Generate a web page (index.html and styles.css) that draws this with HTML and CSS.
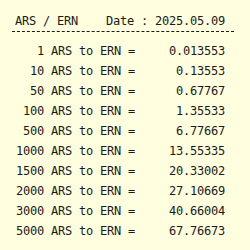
FILE: index.html
```html
<!DOCTYPE html>
<html>
<head>
<meta charset="utf-8">
<link rel="stylesheet" href="styles.css">
</head>
<body>
<div class="rates">
  <div class="head"><span>ARS / ERN</span><span>Date : 2025.05.09</span></div>
  <div class="list">
    <div class="row"><span class="lbl">1 ARS to ERN =</span><span class="val">0.013553</span></div>
    <div class="row"><span class="lbl">10 ARS to ERN =</span><span class="val">0.13553</span></div>
    <div class="row"><span class="lbl">50 ARS to ERN =</span><span class="val">0.67767</span></div>
    <div class="row"><span class="lbl">100 ARS to ERN =</span><span class="val">1.35533</span></div>
    <div class="row"><span class="lbl">500 ARS to ERN =</span><span class="val">6.77667</span></div>
    <div class="row"><span class="lbl">1000 ARS to ERN =</span><span class="val">13.55335</span></div>
    <div class="row"><span class="lbl">1500 ARS to ERN =</span><span class="val">20.33002</span></div>
    <div class="row"><span class="lbl">2000 ARS to ERN =</span><span class="val">27.10669</span></div>
    <div class="row"><span class="lbl">3000 ARS to ERN =</span><span class="val">40.66004</span></div>
    <div class="row"><span class="lbl">5000 ARS to ERN =</span><span class="val">67.76673</span></div>
  </div>
</div>
</body>
</html>
```

FILE: styles.css
```css
html, body {
  margin: 0;
  padding: 0;
  background: #ffffe0;
}
body {
  font-family: "DejaVu Sans Mono", monospace;
  font-size: 12px;
  letter-spacing: -0.224px;
  color: #1a1a1a;
}
.rates {
  width: 222px;
  padding: 12px 0 0 12px;
}
.head {
  display: flex;
  justify-content: space-between;
  padding: 0 9px 0 3px;
  line-height: 19px;
  border-bottom: 1px dashed #1a1a1a;
}
.list {
  margin-top: 9px;
}
.row {
  display: grid;
  grid-template-columns: 123px 90px;
  line-height: 20px;
  white-space: pre;
}
.lbl, .val {
  text-align: right;
}
```
